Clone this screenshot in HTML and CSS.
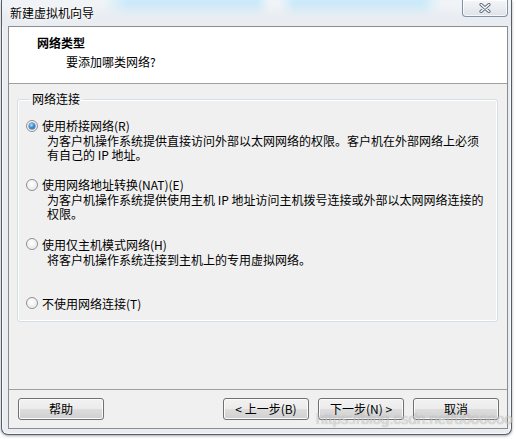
FILE: index.html
```html
<!DOCTYPE html>
<html lang="zh-CN">
<head>
<meta charset="utf-8">
<title>新建虚拟机向导</title>
<link rel="stylesheet" href="styles.css">
</head>
<body>
<div class="window">
  <div class="titlebar">
    <span class="title">新建虚拟机向导</span>
    <button class="close" aria-label="关闭">
      <svg width="14" height="10" viewBox="0 0 14 10">
        <path d="M3 1.5 L11 8.5 M11 1.5 L3 8.5" stroke="#5d6b7c" stroke-width="3.2" stroke-linecap="round" fill="none"/>
        <path d="M3 1.5 L11 8.5 M11 1.5 L3 8.5" stroke="#ffffff" stroke-width="1.4" stroke-linecap="round" fill="none"/>
      </svg>
    </button>
  </div>
  <div class="client">
    <div class="header">
      <div class="h-title">网络类型</div>
      <div class="h-sub">要添加哪类网络?</div>
    </div>
    <div class="body">
      <fieldset class="group">
        <legend class="legend">网络连接</legend>
        <div class="option">
          <span class="radio checked"></span>
          <span class="opt-title">使用桥接网络(R)</span>
          <span class="opt-desc">为客户机操作系统提供直接访问外部以太网网络的权限。客户机在外部网络上必须<br>有自己的 IP 地址。</span>
        </div>
        <div class="option">
          <span class="radio"></span>
          <span class="opt-title">使用网络地址转换(NAT)(E)</span>
          <span class="opt-desc">为客户机操作系统提供使用主机 IP 地址访问主机拨号连接或外部以太网网络连接的<br>权限。</span>
        </div>
        <div class="option">
          <span class="radio"></span>
          <span class="opt-title">使用仅主机模式网络(H)</span>
          <span class="opt-desc">将客户机操作系统连接到主机上的专用虚拟网络。</span>
        </div>
        <div class="option last">
          <span class="radio"></span>
          <span class="opt-title">不使用网络连接(T)</span>
        </div>
      </fieldset>
    </div>
    <div class="footer">
      <button class="btn">帮助</button>
      <div class="btn-group">
        <button class="btn">&lt; 上一步(B)</button>
        <button class="btn">下一步(N) &gt;</button>
        <button class="btn">取消</button>
      </div>
    </div>
  </div>
  <div class="watermark">https://blog.csdn.net/u0ooooo</div>
</div>
</body>
</html>
```
FILE: styles.css
```css
* { box-sizing: border-box; }
html, body {
  margin: 0;
  padding: 0;
  background: #ffffff;
  width: 516px;
  height: 439px;
  overflow: hidden;
  font-family: "Noto Sans CJK SC", "Liberation Sans", sans-serif;
  font-size: 12px;
  color: #000;
}
.window {
  position: relative;
  margin-left: 1px;
  width: 511px;
  height: 435px;
  border: 1px solid #555d66;
  border-top: none;
  border-radius: 0 0 7px 7px;
  background: #e9edf1;
  box-shadow: 0 1px 3px rgba(0,0,0,0.35), inset 1px 0 0 #f8fafc, inset -1px 0 0 #f8fafc, inset 0 -1px 0 #f8fafc;
  display: flex;
  flex-direction: column;
}
.titlebar {
  height: 26px;
  flex: none;
  display: flex;
  align-items: flex-start;
  justify-content: space-between;
  padding-left: 8px;
  padding-right: 3px;
  background:
    linear-gradient(to bottom, rgba(233,237,241,0) 0, rgba(233,237,241,0) 4px, #e9edf1 17px),
    linear-gradient(to right, #f1f4f7 0, #f1f4f7 100px, #cdeafa 125px, #cdeafa 255px, #f1f4f7 268px, #f1f4f7 276px, #cdeafa 292px, #cdeafa 420px, #f1f4f7 440px);
}
.title {
  line-height: 26px;
  height: 26px;
  font-size: 12px;
  color: #000;
  text-shadow: 0 0 6px #fff, 0 0 3px #fff;
}
.close {
  width: 46px;
  height: 17px;
  margin: 0;
  padding: 0;
  border: 1px solid #8391a3;
  border-top: none;
  border-radius: 0 0 4px 4px;
  background: linear-gradient(to bottom, #f4f6f8 0%, #e8ecf0 55%, #dde3ea 100%);
  box-shadow: inset 0 0 0 1px rgba(255,255,255,0.7);
  display: flex;
  align-items: center;
  justify-content: center;
}
.close svg { display: block; }
.client {
  flex: none;
  margin: 0 3px 0 6px;
  height: 403px;
  border: 1px solid #8c8c8c;
  background: #f0f0f0;
  display: flex;
  flex-direction: column;
}
.header {
  height: 57px;
  flex: none;
  background: #ffffff;
  border-bottom: 1px solid #a0a0a0;
  padding: 8px 0 0 28px;
}
.h-title {
  font-weight: bold;
  line-height: 15px;
}
.h-sub {
  margin: 4px 0 0 29px;
  line-height: 15px;
}
.body {
  height: 305px;
  flex: none;
  padding-top: 8px;
}
.group {
  margin: 0 9px 0 8px;
  padding: 12px 0 10px 8px;
  border: 1px solid #d5dfe5;
  border-radius: 3px;
  box-shadow: inset 0 0 0 1px #ffffff;
  min-width: 0;
}
.legend {
  margin-left: 4px;
  padding: 0 3px 0 2px;
  line-height: 14px;
}
.option {
  display: grid;
  grid-template-columns: 12px 1fr;
  column-gap: 4px;
  margin-bottom: 15.3px;
}
.option.last { margin-bottom: 0; }
.radio {
  grid-row: 1;
  grid-column: 1;
  align-self: center;
  width: 12px;
  height: 12px;
  border-radius: 50%;
  border: 1px solid #8e8f8f;
  background: radial-gradient(circle at 45% 40%, #ffffff 0%, #f4f4f4 40%, #d4d4d4 100%);
  box-shadow: inset 0 0 0 1px #f6f6f6;
  position: relative;
}
.radio.checked::after {
  content: "";
  position: absolute;
  left: 2px;
  top: 2px;
  width: 6px;
  height: 6px;
  border-radius: 50%;
  background: radial-gradient(circle at 40% 35%, #b9e6ff 0%, #3d8ed6 45%, #154f95 100%);
  box-shadow: 0 0 0 0.5px #1f5a9c;
}
.opt-title {
  grid-row: 1;
  grid-column: 2;
  line-height: 15px;
  white-space: nowrap;
}
.opt-desc {
  grid-row: 2;
  grid-column: 2;
  padding-left: 5px;
  margin-top: 1px;
  line-height: 14px;
  min-height: 28px;
  white-space: nowrap;
}
.footer {
  flex: none;
  height: 39px;
  border-top: 1px solid #a0a0a0;
  padding: 8px 8px 0 9px;
  display: flex;
  justify-content: space-between;
  align-items: flex-start;
}
.btn-group {
  display: flex;
  gap: 9px;
}
.btn {
  width: 86px;
  height: 22px;
  margin: 0;
  padding: 0;
  font-family: "Noto Sans CJK SC", "Liberation Sans", sans-serif;
  font-size: 12px;
  line-height: 20px;
  color: #000;
  border: 1px solid #707070;
  border-radius: 3px;
  background: linear-gradient(to bottom, #f2f2f2 0%, #ebebeb 50%, #dddddd 51%, #cfcfcf 100%);
  box-shadow: inset 0 0 0 1px #fbfbfb;
}
.watermark {
  position: absolute;
  left: 314px;
  top: 410px;
  font-family: "Liberation Sans", sans-serif;
  font-size: 15px;
  line-height: 18px;
  color: rgba(255,255,255,0.55);
  text-shadow: 0 0 1px rgba(0,0,0,0.35);
  white-space: nowrap;
  pointer-events: none;
}
```
